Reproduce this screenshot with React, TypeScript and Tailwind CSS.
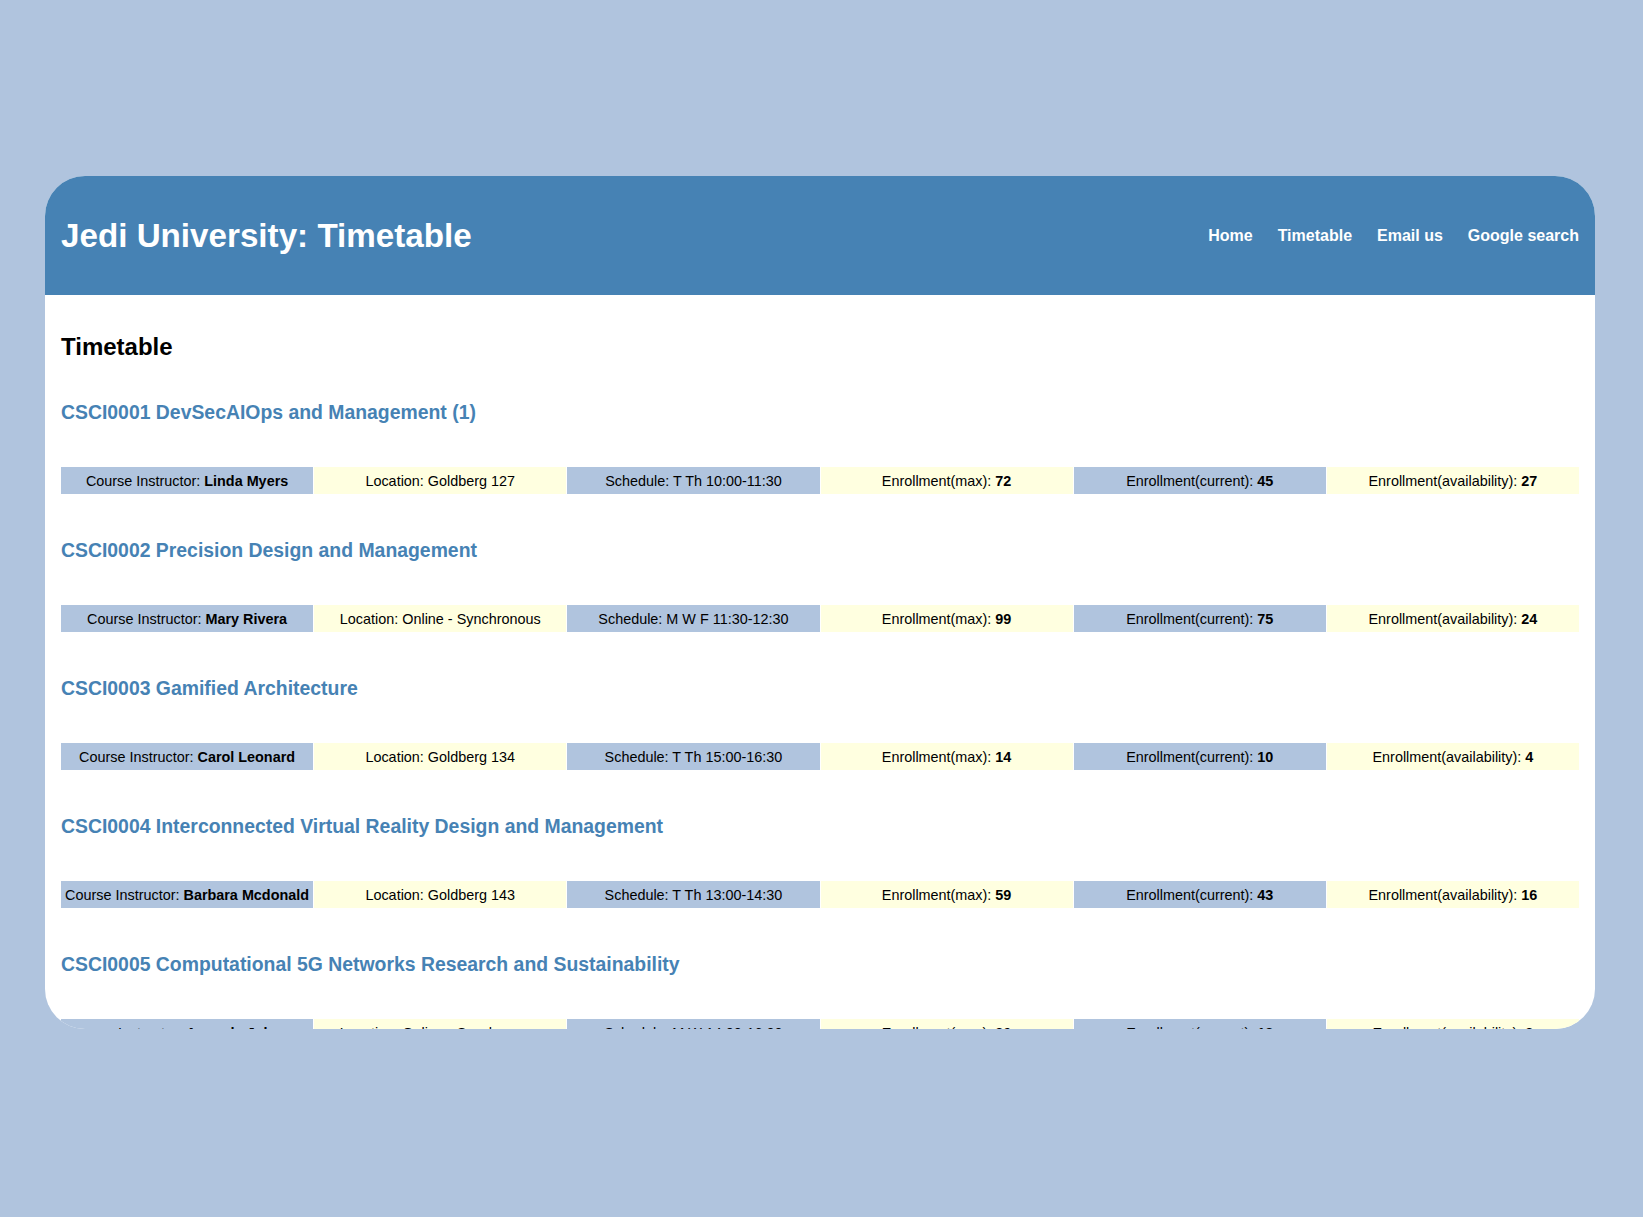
const COURSES = [
  {
    code: "CSCI0001",
    title: "DevSecAIOps and Management (1)",
    instructor: "Linda Myers",
    location: "Goldberg 127",
    schedule: "T Th 10:00-11:30",
    max: 72,
    current: 45,
  },
  {
    code: "CSCI0002",
    title: "Precision Design and Management",
    instructor: "Mary Rivera",
    location: "Online - Synchronous",
    schedule: "M W F 11:30-12:30",
    max: 99,
    current: 75,
  },
  {
    code: "CSCI0003",
    title: "Gamified Architecture",
    instructor: "Carol Leonard",
    location: "Goldberg 134",
    schedule: "T Th 15:00-16:30",
    max: 14,
    current: 10,
  },
  {
    code: "CSCI0004",
    title: "Interconnected Virtual Reality Design and Management",
    instructor: "Barbara Mcdonald",
    location: "Goldberg 143",
    schedule: "T Th 13:00-14:30",
    max: 59,
    current: 43,
  },
  {
    code: "CSCI0005",
    title: "Computational 5G Networks Research and Sustainability",
    instructor: "Amanda Johnson",
    location: "Online - Synchronous",
    schedule: "M W 14:00-16:00",
    max: 20,
    current: 18,
  },
];

const NAV = ["Home", "Timetable", "Email us", "Google search"];

function Cell({ yellow, children }: { yellow?: boolean; children: React.ReactNode }) {
  return (
    <div
      className={
        "flex items-center justify-center whitespace-nowrap pt-[2px] text-[14.4px] leading-[17px] text-black " +
        (yellow ? "bg-[#ffffe0]" : "bg-[#b0c4de]")
      }
    >
      {children}
    </div>
  );
}

export default function App() {
  return (
    <div
      className="min-h-screen bg-[#b0c4de] pt-[176px] pb-[188px]"
      style={{ fontFamily: '"Liberation Sans", Arial, sans-serif' }}
    >
      <div className="ml-[45px] h-[853px] w-[1550px] overflow-hidden rounded-[40px] bg-white">
        <header className="flex h-[119px] items-center justify-between bg-[#4682b4] px-4">
          <h1 className="text-[33.2px] font-bold leading-[38px] text-white">
            Jedi University: Timetable
          </h1>
          <nav className="flex gap-[25px] text-[16px] font-bold leading-[18px] text-white">
            {NAV.map((item) => (
              <a key={item} href="#" className="hover:underline">
                {item}
              </a>
            ))}
          </nav>
        </header>

        <main className="px-4">
          <h2 className="mt-[38px] text-[24px] font-bold leading-[28px] text-black">Timetable</h2>
          {COURSES.map((c, i) => (
            <section key={c.code}>
              <h3
                className={
                  "text-[19.4px] font-bold leading-[22px] text-[#4682b4] " +
                  (i === 0 ? "mt-[40px]" : "mt-[45px]")
                }
              >
                {c.code} {c.title}
              </h3>
              <div className="mt-[44px] grid h-[27px] grid-cols-6 gap-px">
                <Cell>
                  Course Instructor:&nbsp;<b>{c.instructor}</b>
                </Cell>
                <Cell yellow>Location: {c.location}</Cell>
                <Cell>Schedule: {c.schedule}</Cell>
                <Cell yellow>
                  Enrollment(max):&nbsp;<b>{c.max}</b>
                </Cell>
                <Cell>
                  Enrollment(current):&nbsp;<b>{c.current}</b>
                </Cell>
                <Cell yellow>
                  Enrollment(availability):&nbsp;<b>{c.max - c.current}</b>
                </Cell>
              </div>
            </section>
          ))}
        </main>
      </div>
    </div>
  );
}
